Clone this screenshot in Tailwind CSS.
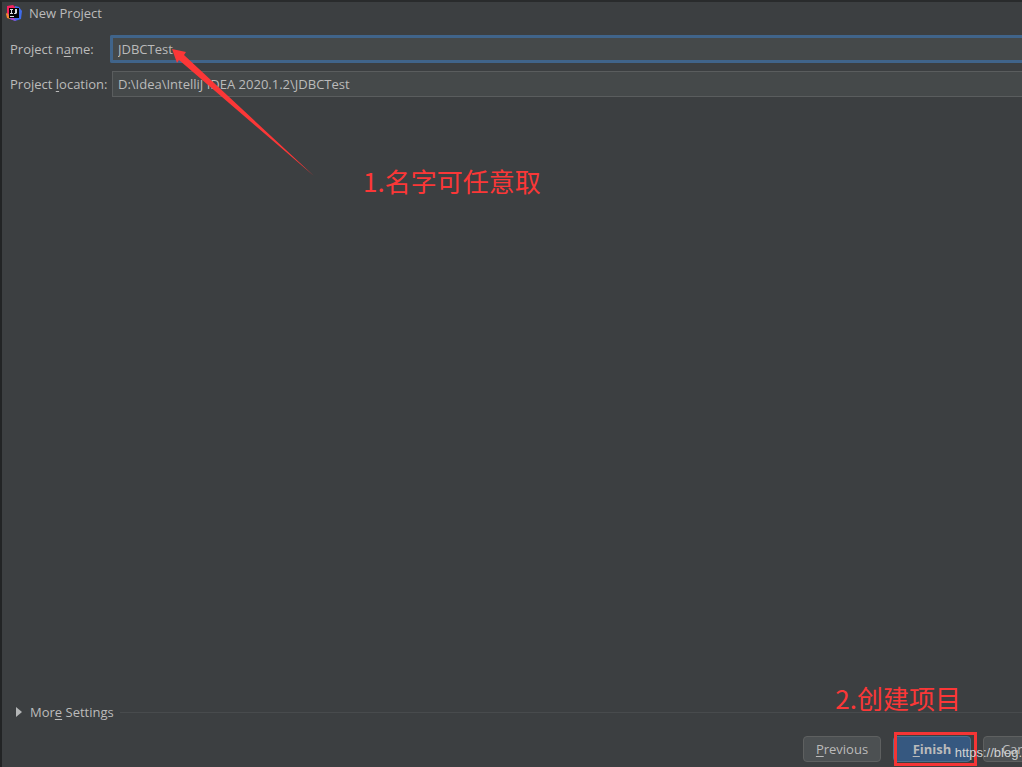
<!DOCTYPE html>
<html lang="zh-CN">
<head>
    <meta charset="UTF-8">
    <meta name="viewport" content="width=device-width, initial-scale=1.0">
    <title>New Project</title>
    <script src="https://cdn.jsdelivr.net/npm/@tailwindcss/browser@4"></script>
</head>
<body class="bg-[#3c3f41] font-['Open_Sans','Noto_Sans_CJK_SC',sans-serif] text-[13px] leading-5 text-[#bbbbbb]">
    <div class="relative flex min-h-screen flex-col overflow-hidden border-t-2 border-l-2 border-t-[#292b2c] border-l-[#222425]">
        <!-- Title bar -->
        <header class="flex h-[22px] items-center gap-[7px] pl-1">
            <svg class="h-4 w-4" viewBox="0 0 16 16" aria-hidden="true">
                <path d="M0 9 2 6l4 5-2 3-3-1z" fill="#f58a2b"/>
                <path d="M1 1 7 0l3 3-5 8-4-3z" fill="#f3245f"/>
                <path d="m9 1 4 1 3 4-1 8-6 2-5-2 5-6z" fill="#3f6bea"/>
                <path d="m2 9 4 2 4 5-6-2z" fill="#b945c4"/>
                <path d="M3 3h10v10H3z" fill="#050505"/>
                <path d="M4 4h3v1H6v3h1v1H4V8h1V5H4zM9 4h2v4l-1 1H8V8h1zM4 11h4v1H4z" fill="#ddd"/>
            </svg>
            <h1>New Project</h1>
        </header>

        <!-- Project fields -->
        <form id="project" class="grid grid-cols-[98px_1fr] items-center gap-x-1 gap-y-[9px] pt-3 pl-2">
            <label for="name" class="whitespace-nowrap">Project n<u class="underline-offset-2">a</u>me:</label>
            <input id="name" type="text" value="JDBCTest" class="-my-px -ml-0.5 h-7 min-w-0 rounded-l-xs border-3 border-r-0 border-[#40648a] bg-[#45494a] pl-[5px] outline-none">
            <label for="location" class="whitespace-nowrap">Project <u class="underline-offset-2">l</u>ocation:</label>
            <input id="location" type="text" value="D:\Idea\IntelliJ IDEA 2020.1.2\JDBCTest" class="h-[26px] min-w-0 border border-r-0 border-[#5a5d5e] bg-[#45494a] pl-[5px] outline-none">
        </form>

        <!-- First note, with its arrow -->
        <svg class="pointer-events-none absolute top-[47px] left-[170px] h-32 w-36" viewBox="0 0 144 128" aria-hidden="true">
            <path d="m0 0 14 3-2 3 130 121L7 11l-2 3z" fill="#fb3737"/>
        </svg>
        <p class="absolute top-[161px] left-[361px] font-['Noto_Sans_CJK_SC',sans-serif] text-[26px] leading-9 text-[#fb3737]">1.名字可任意取</p>

        <!-- More settings -->
        <div class="mt-auto flex items-center gap-1.5">
            <button type="button" class="flex items-center gap-2 pl-3.5">
                <svg class="h-2.5 w-1.5" viewBox="0 0 6 10" aria-hidden="true"><path d="M0 0 6 5 0 10z" fill="#b4b6b7"/></svg>
                <span>Mor<u class="underline-offset-2">e</u> Settings</span>
            </button>
            <div class="h-px flex-1 bg-[#484b4d]"></div>
        </div>

        <!-- Buttons -->
        <footer class="-mr-[39px] flex items-center justify-end gap-3 pt-3.5 pb-[5px]">
            <button type="button" class="h-[26px] w-[78px] rounded-sm border border-[#5e6060] bg-[#4c5052]"><u class="underline-offset-2">P</u>revious</button>
            <div class="relative">
                <button type="submit" form="project" class="h-[26px] w-[78px] rounded-sm border border-[#4c708c] bg-[#365880] font-bold"><u class="underline-offset-2">F</u>inish</button>
                <div class="pointer-events-none absolute -inset-y-1 -right-1.5 left-px border-3 border-[#f53535]"></div>
                <p class="absolute right-2.5 bottom-full mb-5 font-['Noto_Sans_CJK_SC',sans-serif] text-[26px] leading-9 whitespace-nowrap text-[#fb3737]">2.创建项目</p>
            </div>
            <button type="button" class="h-[26px] w-[78px] rounded-sm border border-[#5e6060] bg-[#4c5052]">Cancel</button>
        </footer>
        <div class="pointer-events-none absolute right-0 bottom-1 font-['Liberation_Sans',sans-serif] text-[13px] text-[#d0d2d3]">https://blog.</div>
    </div>
</body>
</html>
